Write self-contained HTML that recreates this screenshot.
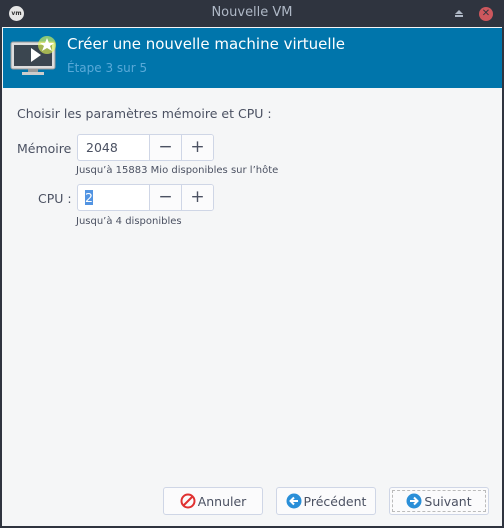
<!DOCTYPE html>
<html><head><meta charset="utf-8"><style>
*{margin:0;padding:0;box-sizing:border-box}
body{width:504px;height:528px;background:#2f343f;font-family:"DejaVu Sans","Liberation Sans",sans-serif;position:relative;overflow:hidden}
.abs{position:absolute}
.body{left:2px;top:27px;width:500px;height:499px;background:#f5f6f7}
.banner{left:3px;top:28px;width:499px;height:60px;background:#0075ab}
.t{font-size:12px;color:#4b5162;position:absolute;white-space:nowrap}
.spin{position:absolute;left:77px;width:137px;height:27px;border:1px solid #cfd6e6;border-radius:3px;background:#fff;overflow:hidden}
.spin .b{position:absolute;top:0;width:32px;height:25px;border-left:1px solid #cfd6e6;background:#fbfbfc;text-align:center;font-size:17px;line-height:24px;color:#4b5162}
.btn{position:absolute;top:487px;width:100px;height:28px;border:1px solid #cfd6e6;border-radius:3px;background:#fbfbfc;font-size:12.5px;color:#4b5162;display:flex;align-items:center;justify-content:center;gap:2px}
</style></head><body>
<div class="abs" style="left:9px;top:6px;width:15px;height:15px;border-radius:50%;background:#e6e6e6;font-size:6px;text-align:center;line-height:15px;color:#333;font-weight:bold">vm</div>
<div class="abs" style="left:0;top:5px;width:504px;text-align:center;color:#afb8c6;font-size:13px">Nouvelle VM</div>
<div class="abs" style="left:455px;top:10px;width:0;height:0;border-left:4px solid transparent;border-right:4px solid transparent;border-bottom:4px solid #afb8c6"></div>
<div class="abs" style="left:455px;top:15px;width:8px;height:2px;background:#afb8c6"></div>
<div class="abs" style="left:479px;top:7px;width:14px;height:14px;border-radius:50%;background:#cc575d;color:#2f343f;font-size:10px;font-weight:bold;text-align:center;line-height:14px">✕</div>
<div class="abs body"></div>
<div class="abs banner"></div>
<svg class="abs" style="left:10px;top:34px" width="48" height="44" viewBox="0 0 48 44">
<rect x="1" y="8" width="44" height="27" rx="2" fill="#ddd" stroke="#999"/>
<rect x="4" y="11" width="38" height="21" fill="#3b4650"/>
<polygon points="21,14 21,28 31,21" fill="#fff"/>
<rect x="18" y="35" width="10" height="3" fill="#999"/><rect x="12" y="38" width="22" height="3" fill="#ccc"/>
<circle cx="37" cy="11" r="9" fill="#e9ff55" opacity=".6"/>
<polygon points="37,4 39,9 44,9 40,12 42,17 37,14 32,17 34,12 30,9 35,9" fill="#fff"/>
</svg>
<div class="abs" style="left:67px;top:35px;color:#fff;font-size:15px">Créer une nouvelle machine virtuelle</div>
<div class="abs" style="left:67px;top:61px;color:#59a9d8;font-size:12px">Étape 3 sur 5</div>
<div class="t" style="left:17px;top:106px;font-size:12.5px">Choisir les paramètres mémoire et CPU :</div>
<div class="t" style="left:17px;top:141px;font-size:12.5px">Mémoire</div>
<div class="spin" style="top:134px"><span class="t" style="left:8px;top:5px;font-size:12.5px">2048</span><div class="b" style="left:71px">−</div><div class="b" style="left:103px">+</div></div>
<div class="t" style="left:76px;top:165px;font-size:10px">Jusqu’à 15883 Mio disponibles sur l’hôte</div>
<div class="t" style="left:38px;top:191px;font-size:12.5px">CPU :</div>
<div class="spin" style="top:184px"><span class="t" style="left:7px;top:5px;font-size:12.5px;background:#5294e2;color:#fff">2</span><div class="b" style="left:71px">−</div><div class="b" style="left:103px">+</div></div>
<div class="t" style="left:76px;top:216px;font-size:10px">Jusqu’à 4 disponibles</div>
<div class="btn" style="left:163px"><svg width="16" height="16" viewBox="0 0 16 16"><circle cx="8" cy="8" r="6.5" fill="none" stroke="#e03131" stroke-width="2"/><line x1="3.5" y1="12.5" x2="12.5" y2="3.5" stroke="#e03131" stroke-width="2"/></svg>Annuler</div>
<div class="btn" style="left:276px"><svg width="16" height="16" viewBox="0 0 16 16"><circle cx="8" cy="8" r="7.5" fill="#2a8fd8"/><path d="M12 8H5M8 4.5 4.5 8 8 11.5" stroke="#fff" stroke-width="2" fill="none"/></svg>Précédent</div>
<div class="btn" style="left:389px;outline:1px dashed #bbb;outline-offset:-4px"><svg width="16" height="16" viewBox="0 0 16 16"><circle cx="8" cy="8" r="7.5" fill="#2a8fd8"/><path d="M4 8h7M8 4.5 11.5 8 8 11.5" stroke="#fff" stroke-width="2" fill="none"/></svg>Suivant</div>
</body></html>
